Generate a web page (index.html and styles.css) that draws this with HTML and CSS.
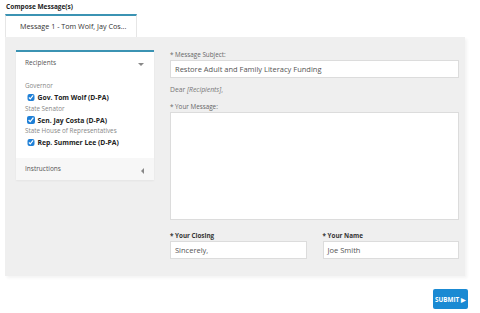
FILE: index.html
```html
<!DOCTYPE html>
<html lang="en">
<head>
    <meta charset="UTF-8">
    <title>Compose Message(s)</title>
    <link rel="stylesheet" href="styles.css">
</head>
<body>
    <div class="compose">
        <h1 class="compose-title">Compose Message(s)</h1>

        <!-- Tabs -->
        <div class="tabs">
            <div class="tab active">Message 1 - Tom Wolf, Jay Cos...</div>
        </div>

        <!-- Panel -->
        <div class="panel">
            <div class="sidebar">
                <div class="side-section recipients">
                    <div class="side-head">
                        <span>Recipients</span>
                        <span class="caret down"></span>
                    </div>
                    <div class="group-label">Governor</div>
                    <label class="recipient"><input type="checkbox" checked> Gov. Tom Wolf (D-PA)</label>
                    <div class="group-label">State Senator</div>
                    <label class="recipient"><input type="checkbox" checked> Sen. Jay Costa (D-PA)</label>
                    <div class="group-label">State House of Representatives</div>
                    <label class="recipient"><input type="checkbox" checked> Rep. Summer Lee (D-PA)</label>
                </div>
                <div class="side-section instructions">
                    <div class="side-head">
                        <span>Instructions</span>
                        <span class="caret left"></span>
                    </div>
                </div>
            </div>

            <div class="form">
                <label class="field-label">* Message Subject:</label>
                <div class="input">Restore Adult and Family Literacy Funding</div>
                <p class="salutation">Dear <em>[Recipients]</em>,</p>
                <label class="field-label">* Your Message:</label>
                <div class="input textarea"></div>
                <div class="form-row">
                    <div class="form-col">
                        <label class="field-label strong">* Your Closing</label>
                        <div class="input">Sincerely,</div>
                    </div>
                    <div class="form-col">
                        <label class="field-label strong">* Your Name</label>
                        <div class="input">Joe Smith</div>
                    </div>
                </div>
            </div>
        </div>

        <div class="actions">
            <button class="submit">SUBMIT &#9654;</button>
        </div>
    </div>
</body>
</html>
```

FILE: styles.css
```css
* {
    margin: 0;
    padding: 0;
    box-sizing: border-box;
}

body {
    background: #fff;
    font-family: "Open Sans", Arial, sans-serif;
    color: #444;
    width: 480px;
}

.compose {
    padding: 2px 15px 0 5px;
}

.compose-title {
    font-size: 6.5px;
    font-weight: bold;
    color: #222;
    line-height: 9px;
    padding-left: 1px;
}

/* Tabs */
.tabs {
    display: flex;
    margin-top: 3px;
}

.tab {
    width: 132px;
    height: 23px;
    line-height: 21px;
    padding-left: 14px;
    font-size: 7.2px;
    color: #333;
    background: #fff;
    border-top: 2px solid #3b93b3;
    border-left: 1px solid #e6e6e6;
    border-right: 1px solid #e6e6e6;
    white-space: nowrap;
}

/* Panel */
.panel {
    display: flex;
    align-items: flex-start;
    gap: 16px;
    height: 239px;
    background: #efefef;
    padding: 13px 6px 0 11px;
    box-shadow: 2px 2px 3px rgba(0, 0, 0, 0.05);
}

.sidebar {
    width: 138px;
    border-top: 2px solid #3b93b3;
    box-shadow: 0 1px 2px rgba(0, 0, 0, 0.05);
}

.side-section {
    padding: 0 9px;
}

.recipients {
    background: #fff;
    padding-bottom: 9px;
}

.instructions {
    background: #f7f7f7;
    height: 22px;
}

.side-head {
    display: flex;
    justify-content: space-between;
    align-items: center;
    font-size: 6.5px;
    color: #555;
    height: 22px;
}

.recipients .side-head {
    height: 21px;
    margin-bottom: 8px;
}

.caret {
    width: 0;
    height: 0;
    margin-right: 1px;
}

.caret.down {
    border-left: 3.5px solid transparent;
    border-right: 3.5px solid transparent;
    border-top: 3.5px solid #888;
    margin-top: 3px;
}

.caret.left {
    border-top: 3px solid transparent;
    border-bottom: 3px solid transparent;
    border-right: 3px solid #888;
    margin-top: 5px;
}

.group-label {
    font-size: 6.3px;
    color: #888;
    line-height: 9.5px;
}

.recipient {
    display: flex;
    align-items: center;
    gap: 3px;
    font-size: 6.8px;
    font-weight: bold;
    color: #222;
    height: 13px;
    padding: 1px 0 0 2px;
}

.recipient input {
    width: 7.5px;
    height: 7.5px;
    margin: 0;
    accent-color: #1e7fd6;
}

/* Form */
.form {
    flex: 1;
    display: flex;
    flex-direction: column;
    padding-top: 1px;
}

.field-label {
    font-size: 6.3px;
    color: #666;
    line-height: 8px;
    margin-bottom: 1px;
}

.field-label.strong {
    font-weight: bold;
    color: #333;
}

.input {
    background: #fff;
    border: 1px solid #dcdcdc;
    height: 18px;
    line-height: 16px;
    padding-left: 4px;
    font-size: 7.5px;
    color: #555;
}

.salutation {
    font-size: 6.8px;
    color: #777;
    line-height: 10px;
    margin: 7px 0 8px;
}

.textarea {
    height: 108px;
    margin-bottom: 12px;
}

.form-row {
    display: flex;
    gap: 16px;
}

.form-col {
    flex: 1;
    display: flex;
    flex-direction: column;
}

/* Actions */
.actions {
    display: flex;
    justify-content: flex-end;
    margin: 13px -3px 0 0;
}

.submit {
    width: 35px;
    height: 20px;
    padding: 0;
    background: #1a8ad3;
    color: #fff;
    border: none;
    border-radius: 2px;
    font-family: "Open Sans", Arial, sans-serif;
    font-size: 6.3px;
    font-weight: bold;
    white-space: nowrap;
}
```
